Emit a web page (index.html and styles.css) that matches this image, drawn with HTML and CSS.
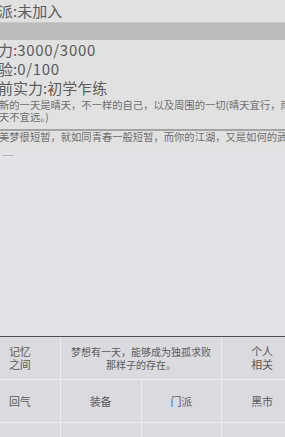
FILE: index.html
```html
<!DOCTYPE html>
<html lang="zh-CN">
<head>
<meta charset="utf-8">
<link rel="stylesheet" href="styles.css">
</head>
<body>
<div class="page">
  <section class="content">
    <div class="sect-row">门派:未加入</div>
    <div class="bar"></div>
    <div class="stats">
      <div class="stat">体力:<span class="num">3000/3000</span></div>
      <div class="stat">经验:<span class="num">0/100</span></div>
      <div class="stat">当前实力:初学乍练</div>
    </div>
    <div class="log">
      <div class="entry first">新的一天是晴天，不一样的自己，以及周围的一切(晴天宜行，雨<br>天不宜远。)</div>
      <div class="entry">美梦很短暂，就如同青春一般短暂，而你的江湖，又是如何的武林呢</div>
      <div class="dash">——</div>
    </div>
  </section>
  <nav class="grid">
    <div class="btn">记忆<br>之间</div>
    <div class="btn wide small">梦想有一天，能够成为独孤求败<br>那样子的存在。</div>
    <div class="btn">个人<br>相关</div>
    <div class="btn">回气</div>
    <div class="btn">装备</div>
    <div class="btn">门派</div>
    <div class="btn">黑市</div>
    <div class="btn"></div>
    <div class="btn"></div>
    <div class="btn"></div>
    <div class="btn"></div>
  </nav>
</div>
</body>
</html>
```
FILE: styles.css
```css
html, body {
  margin: 0;
  padding: 0;
  background: #e3e3e6;
  overflow: hidden;
}
body {
  width: 285px;
  height: 437px;
}
.page {
  width: 322px;
  margin-left: -20px;
  font-family: "Noto Sans CJK SC", sans-serif;
  color: #5c5c5c;
}
.content {
  height: 336px;
  background: linear-gradient(#e1e1e1 0, #e1e1e1 145px, #e4e3e8 160px);
}
.sect-row {
  height: 22px;
  line-height: 22px;
  font-size: 15px;
  padding-left: 3px;
  white-space: nowrap;
}
.bar {
  height: 18px;
  background: #bcbcbc;
  border-top: 1px solid #c9c9c9;
  box-sizing: border-box;
}
.stats {
  padding-left: 3px;
}
.stat {
  height: 19px;
  line-height: 19px;
  font-size: 15px;
  white-space: nowrap;
}
.num {
  letter-spacing: 0.7px;
}
.log {
  padding-top: 2px;
}
.entry {
  font-size: 10.3px;
  line-height: 12px;
  padding-left: 19px;
  color: #6e6e6e;
  white-space: nowrap;
}
.entry.first {
  padding-bottom: 6px;
  border-bottom: 2px solid #a4a4a4;
}
.dash {
  padding-left: 22px;
  padding-top: 7px;
  font-size: 7px;
  line-height: 8px;
  color: #9a9a9a;
}
.grid {
  display: grid;
  grid-template-columns: repeat(4, 1fr);
  grid-auto-rows: 42px;
  gap: 1px;
  background: #ececef;
  border-top: 1px solid #4e4e4e;
}
.btn {
  background: #dbdbdf;
  display: flex;
  align-items: center;
  justify-content: center;
  text-align: center;
  font-size: 11px;
  line-height: 13px;
  color: #5a5a5a;
}
.btn.wide {
  grid-column: span 2;
}
.btn.small {
  font-size: 10px;
}
```
